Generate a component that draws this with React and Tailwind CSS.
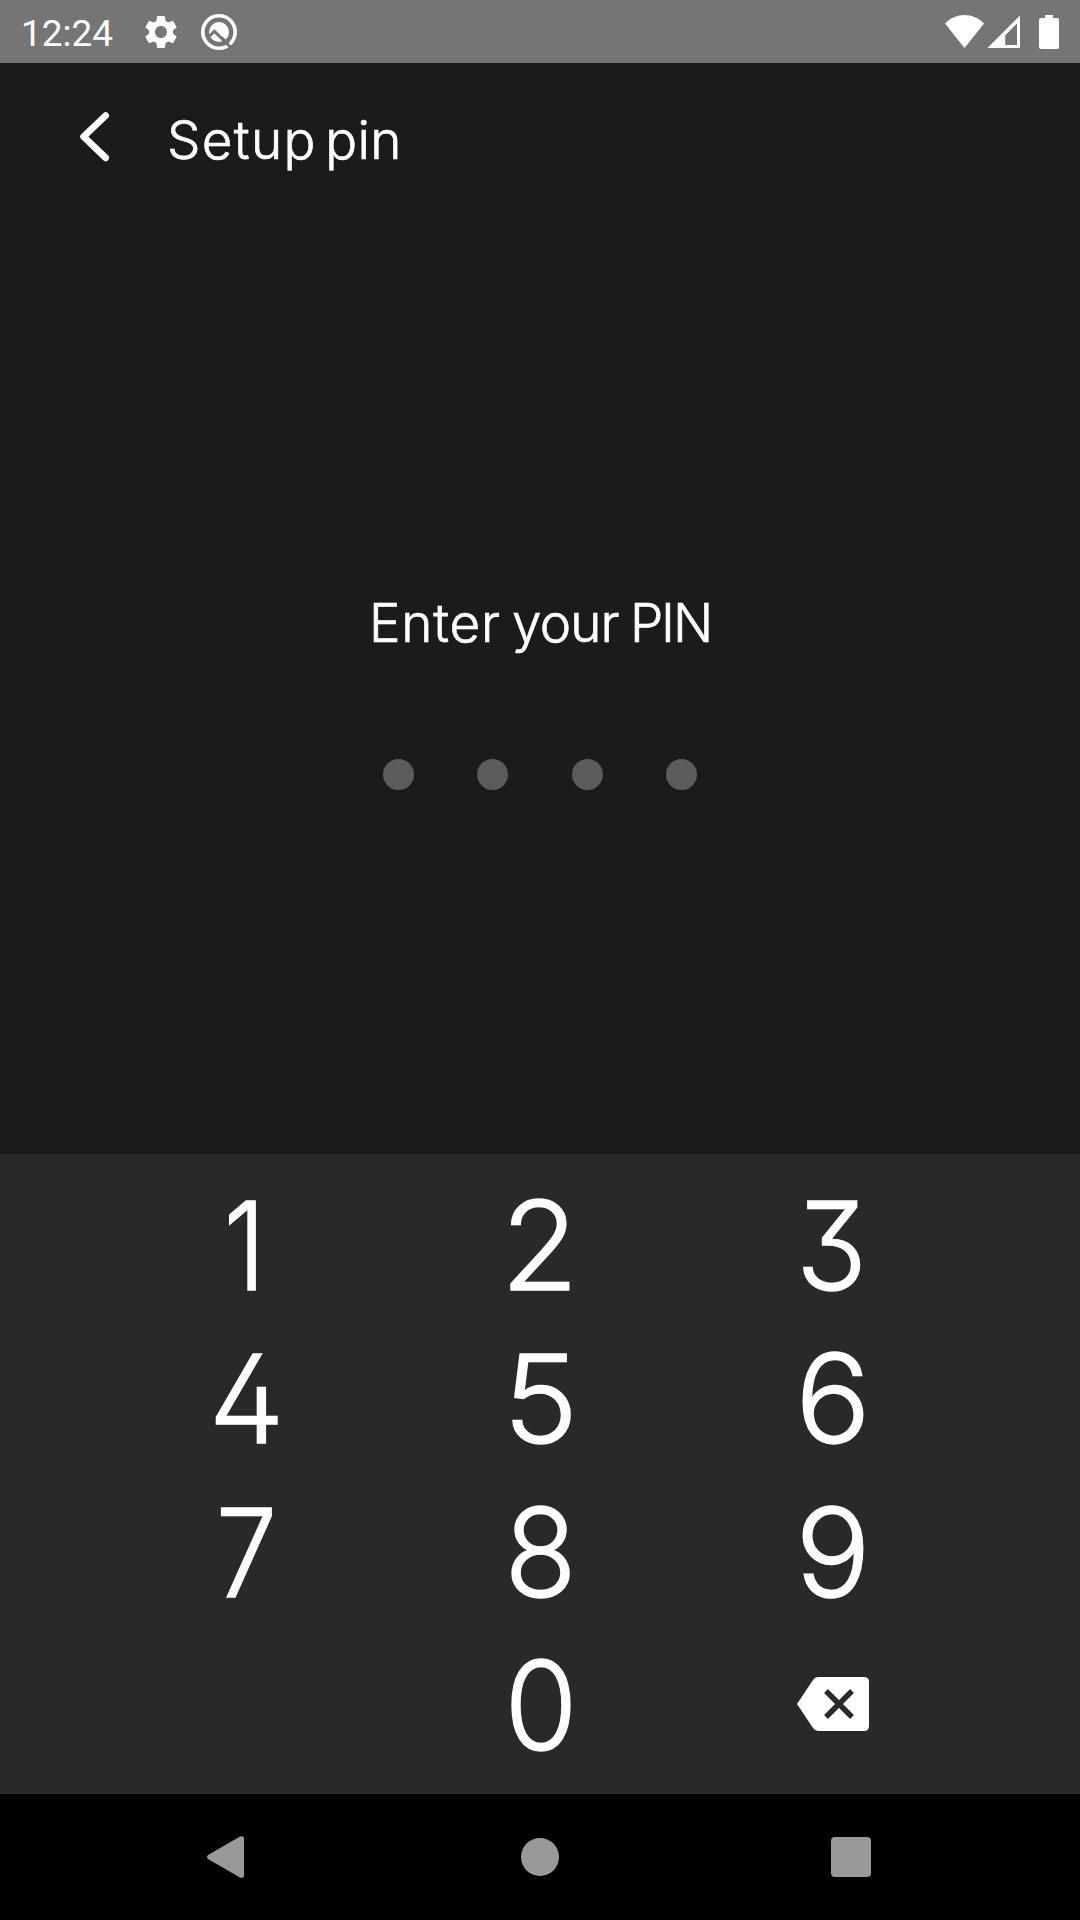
import React from "react";

function GearIcon() {
  return (
    <svg className="size-[40px]" viewBox="0 0 24 24" fill="#fff">
      <path d="M19.14 12.94c.04-.3.06-.61.06-.94 0-.32-.02-.64-.07-.94l2.03-1.58c.18-.14.23-.41.12-.61l-1.92-3.32c-.12-.22-.37-.29-.59-.22l-2.39.96c-.5-.38-1.03-.7-1.62-.94l-.36-2.54c-.04-.24-.24-.41-.48-.41h-3.84c-.24 0-.43.17-.47.41l-.36 2.54c-.59.24-1.13.57-1.62.94l-2.39-.96c-.22-.08-.47 0-.59.22L2.74 8.87c-.12.21-.08.47.12.61l2.03 1.58c-.05.3-.09.63-.09.94s.02.64.07.94l-2.03 1.58c-.18.14-.23.41-.12.61l1.92 3.32c.12.22.37.29.59.22l2.39-.96c.5.38 1.03.7 1.62.94l.36 2.54c.05.24.24.41.48.41h3.84c.24 0 .44-.17.47-.41l.36-2.54c.59-.24 1.13-.56 1.62-.94l2.39.96c.22.08.47 0 .59-.22l1.92-3.32c.12-.22.07-.47-.12-.61l-2.01-1.58zM12 15.6c-1.98 0-3.6-1.62-3.6-3.6s1.62-3.6 3.6-3.6 3.6 1.62 3.6 3.6-1.62 3.6-3.6 3.6z" />
    </svg>
  );
}

function CompassIcon() {
  return (
    <svg className="size-[38px]" viewBox="0 0 38 38" fill="none">
      <circle cx="19" cy="19" r="16.2" stroke="#fff" strokeWidth="3.6" />
      <circle cx="19" cy="19" r="10" fill="#fff" />
      <path d="M9.5 23 L14.4 18.4 L30.5 34" stroke="#757575" strokeWidth="3" />
      <path d="M21.5 24.5 L27.8 31" stroke="#757575" strokeWidth="3" />
    </svg>
  );
}

function StatusBar() {
  return (
    <header className="flex h-[63px] items-center bg-[#757575] pr-[20px] pl-[21px]">
      <span className="w-[120px] pt-[4px] font-[Roboto,sans-serif] text-[37px] leading-none">12:24</span>
      <GearIcon />
      <span className="ml-[19px]"><CompassIcon /></span>
      <svg className="ml-auto h-[34px] w-[39px]" viewBox="0 0 39 34" fill="#fff">
        <path d="M0 8.6 C11 -2.8 28 -2.8 39 8.6 L19.5 33 Z" />
      </svg>
      <svg className="ml-[3px] h-[34px] w-[34px]" viewBox="0 0 34 34" fill="#fff">
        <path fillRule="evenodd" d="M33 .5 V33 H.5 Z M30 8.5 L18.2 20.2 V30 H30 Z" />
      </svg>
      <svg className="mr-[1px] ml-[18px] h-[34px] w-[20px]" viewBox="0 0 20 34" fill="#fff">
        <path d="M6 0 H14 V3 H18 Q20 3 20 5 V32 Q20 34 18 34 H2 Q0 34 0 32 V5 Q0 3 2 3 H6 Z" />
      </svg>
    </header>
  );
}

const digits = [
  ["1", "scale-x-[0.86] pr-[5px]"],
  ["2", "scale-x-[1.03]"],
  ["3", "scale-x-[0.95] pr-[3px]"],
  ["4", "scale-x-[0.98]"],
  ["5", "scale-x-[1.03]"],
  ["6", "scale-x-[1.02] pr-[1px]"],
  ["7", "scale-x-[0.89]"],
  ["8", "scale-x-[0.96] pl-[1px]"],
  ["9", "scale-x-[1.02] pr-[1px]"],
];

function Key({ children, stretch }) {
  return (
    <button className="flex items-center justify-center pt-[2px] text-[123px] leading-none font-light [font-feature-settings:'cv02','cv09'] [-webkit-text-stroke:1.4px_#fff]">
      <span className={stretch}>{children}</span>
    </button>
  );
}

export default function App() {
  return (
    <div className="flex h-[1920px] w-[1080px] flex-col overflow-hidden bg-[#1b1b1b] font-[Inter,sans-serif] text-white">
      <StatusBar />
      <main className="flex h-[1091px] flex-col">
        <div className="flex h-[148px] items-center pl-[78px]">
          <svg className="h-[52px] w-[34px]" viewBox="0 0 34 52" fill="none" stroke="#fff" strokeWidth="6.8" strokeLinecap="round" strokeLinejoin="round">
            <path d="M27.6 4.6 L5.6 25.6 L27.6 46.8" />
          </svg>
          <h1 className="ml-[55px] pt-[6px] text-[53px] leading-none font-light [word-spacing:-6.3px] [-webkit-text-stroke:0.7px_#fff]">
            <span className="tracking-[1.3px]">Setup</span> <span className="tracking-[0.4px]">pin</span>
          </h1>
        </div>
        <div className="mt-[375px] flex flex-col items-center">
          <h2 className="pt-[1px] text-[53px] leading-[72px] font-light [word-spacing:-3.6px] [-webkit-text-stroke:0.7px_#fff]">
            <span className="tracking-[0.8px]">Enter</span> <span className="tracking-[-0.9px]">your</span> <span className="tracking-[-2.1px]">PIN</span>
          </h2>
          <div className="mt-[100px] flex gap-[63.3px]">
            {[0, 1, 2, 3].map((i) => <span key={i} className="size-[31px] rounded-full bg-[#5b5b5b]" />)}
          </div>
        </div>
      </main>
      <section className="h-[640px] bg-[#292929] px-[100px] pt-[13.3px]">
        <div className="grid h-[614.5px] grid-cols-3 grid-rows-4">
          {digits.map(([d, stretch]) => <Key key={d} stretch={stretch}>{d}</Key>)}
          <span />
          <Key stretch="scale-x-[0.96] pl-[1px]">0</Key>
          <button className="flex items-center justify-center pb-[1.6px]">
            <svg className="h-[54px] w-[72px]" viewBox="0 0 72 54">
              <path d="M21 0 H67 Q72 0 72 5 V49 Q72 54 67 54 H21 Q18 54 16 51 L0 27 L16 3 Q18 0 21 0 Z" fill="#fff" />
              <path d="M29 14 L55 40 M55 14 L29 40" stroke="#292929" strokeWidth="5.4" />
            </svg>
          </button>
        </div>
      </section>
      <nav className="flex h-[126px] items-center bg-black">
        <svg className="ml-[206px] h-[44px] w-[39px]" viewBox="0 0 39 44" fill="#999">
          <path d="M2 20 L34 1.6 Q38 0 38 4 V40 Q38 44 34 42.4 L2 24 Q0 22 2 20 Z" />
        </svg>
        <span className="ml-[276px] size-[38px] rounded-full bg-[#999]" />
        <span className="ml-[272px] size-[40px] rounded-[4px] bg-[#999]" />
      </nav>
    </div>
  );
}
